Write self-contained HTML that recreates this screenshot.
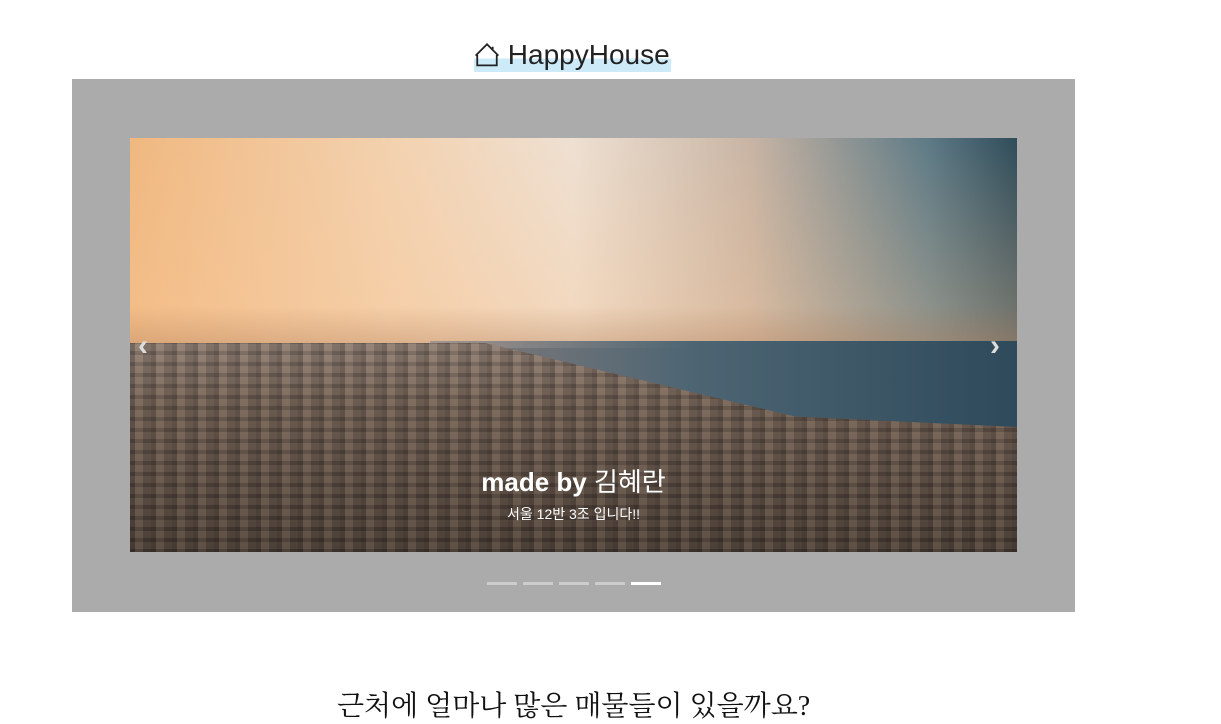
<!DOCTYPE html>
<html><head><meta charset="utf-8"><style>
body{margin:0;width:1221px;height:715px;overflow:hidden;background:#fff;position:relative;font-family:"Liberation Sans","Noto Sans CJK KR",sans-serif}
.t{position:absolute;left:474px;top:37px;font-size:28px;color:#222;line-height:36px;background:linear-gradient(#fff 0,#fff 62%,#cdeaf8 62%,#cdeaf8 100%);padding-right:1px;height:35px;overflow:hidden}
.box{position:absolute;left:72px;top:79px;width:1003px;height:533px;background:#ababab}
.img{position:absolute;left:58px;top:59px;width:887px;height:414px;overflow:hidden;background:#4a3e38}
.sky{position:absolute;left:0;top:0;width:100%;height:210px;background:linear-gradient(90deg,#f0b880 0,#f3d2b0 30%,#eee0d2 50%,#c8b4a4 70%,#5d7a86 90%,#2f4c5a 100%)}
.sky2{position:absolute;left:0;top:0;width:100%;height:210px;background:linear-gradient(180deg,rgba(255,255,255,0) 0,rgba(250,200,150,.3) 80%,rgba(200,150,110,.6) 100%)}
.sea{position:absolute;left:300px;top:203px;width:587px;height:90px;background:linear-gradient(90deg,rgba(150,140,140,.8),#4d6573 45%,#2e4a5b)}
.city{position:absolute;left:0;top:205px;width:100%;height:210px;clip-path:polygon(0 0,40% 0,60% 20%,75% 35%,100% 40%,100% 100%,0 100%);background:
repeating-linear-gradient(90deg,rgba(0,0,0,.18) 0 5px,rgba(255,220,180,.06) 5px 13px,rgba(0,0,0,.1) 13px 21px),
repeating-linear-gradient(0deg,rgba(0,0,0,.12) 0 4px,rgba(255,230,200,.05) 4px 11px),
linear-gradient(180deg,#8a7a70 0,#6e5d52 30%,#4a3e36 100%)}
.ch{position:absolute;left:0;width:100%;text-align:center;color:#fff}
.ar{position:absolute;top:250px;color:#ddd;font-size:30px;font-weight:bold}
.ind{position:absolute;top:503px;height:3px;width:30px;background:#ccc}
.q{position:absolute;left:337px;top:684px;font-family:"Liberation Serif","Noto Serif CJK SC",serif;font-size:28px;color:#111}
</style></head><body>
<div class="t"><svg width="26" height="26" viewBox="0 0 16 16" style="vertical-align:-3px"><path d="M2 8.5V15h12V8.5M1 9L8 2l7 7M11.5 3.5V5" fill="none" stroke="#222" stroke-width="1.1"/></svg> HappyHouse</div>
<div class="box">
<div class="img"><div class="sky"></div><div class="sky2"></div><div class="sea"></div><div class="city"></div>
<div class="ch" style="top:324px;font-size:26px;font-weight:bold">made by <span style="font-weight:normal">김혜란</span></div>
<div class="ch" style="top:366px;font-size:14px">서울 12반 3조 입니다!!</div>
</div>
<div class="ar" style="left:66px">‹</div><div class="ar" style="left:918px">›</div>
<div class="ind" style="left:415px"></div><div class="ind" style="left:451px"></div><div class="ind" style="left:487px"></div><div class="ind" style="left:523px"></div><div class="ind" style="left:559px;background:#fff"></div>
</div>
<div class="q">근처에 얼마나 많은 매물들이 있을까요?</div>
</body></html>
